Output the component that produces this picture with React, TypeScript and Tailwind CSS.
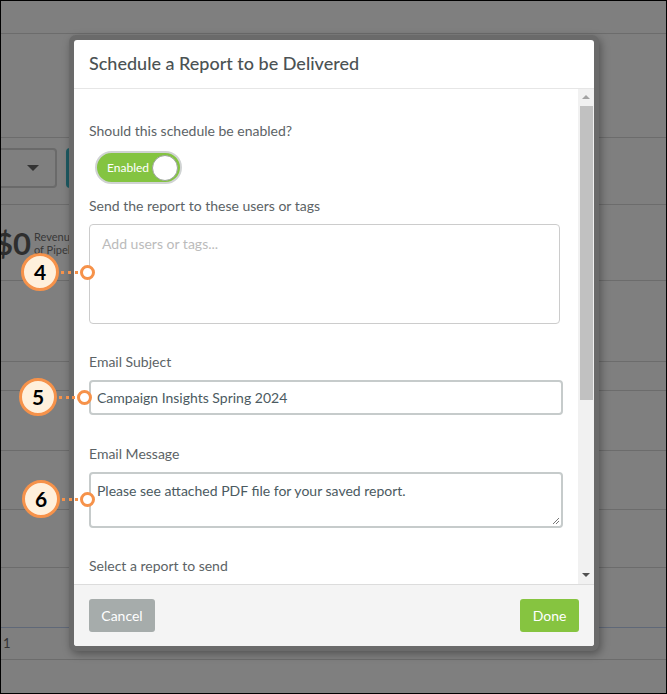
import React from "react";

const rowHeights = [33, 104, 67, 76, 81, 29, 60, 59, 58];

function Marker({ n, cx, cy, dx }: { n: number; cx: number; cy: number; dx: number }) {
  // big numbered circle + dotted leader + small hollow circle
  return (
    <div className="absolute flex items-center" style={{ left: cx - 20, top: cy - 20 }}>
      <div className="flex h-[38px] w-[38px] items-center justify-center rounded-full border-[3px] border-[#f6924a] bg-[#fff0dc] text-[21px] font-bold text-black">
        {n}
      </div>
      <div className="ml-[2px] h-[3px] border-t-[3px] border-dotted border-[#f6924a]" style={{ width: dx - cx - 31 }} />
      <div className="ml-[2px] h-[15px] w-[15px] rounded-full border-[3px] border-[#f6924a] bg-white" />
    </div>
  );
}

function Toggle() {
  return (
    <div className="flex h-[33px] w-[87px] items-center rounded-full border-2 border-[#d0d3d3] bg-[#84c441] pl-[10px] pr-[2px]">
      <span className="flex-1 text-[12px] text-white">Enabled</span>
      <div className="h-[26px] w-[26px] rounded-full border border-[#9aa29a] bg-white" />
    </div>
  );
}

function Label({ children, className = "" }: { children: React.ReactNode; className?: string }) {
  return <div className={`h-[20px] text-[14px] leading-[20px] text-[#5c6366] ${className}`}>{children}</div>;
}

export default function App() {
  return (
    <div className="relative h-[694px] w-[667px] overflow-hidden border border-black bg-[#7f7f7f] font-['Lato','Noto_Sans',sans-serif]">
      {/* dimmed page behind the modal */}
      <div className="flex flex-col">
        {rowHeights.map((h, i) => (
          <div key={i} className="border-b border-[#6c6c6c]" style={{ height: h }}>
            {i === 2 && (
              <div className="flex gap-[9px] pt-[10px]">
                <div className="flex h-[40px] w-[56px] items-center justify-end rounded-r-[4px] border-2 border-l-0 border-[#6a6a6a] pr-[16px]">
                  <div className="h-0 w-0 border-x-[6px] border-t-[6px] border-x-transparent border-t-[#333]" />
                </div>
                <div className="h-[40px] w-[30px] rounded-l-[4px] bg-[#1d5a62]" />
              </div>
            )}
            {i === 3 && (
              <div className="flex items-center gap-[3px] pt-[22px]">
                <span className="ml-[-6px] text-[31px] font-bold leading-[32px] text-[#2e2e2e]">$0</span>
                <div className="text-[11px] leading-[13px] text-[#383838]">
                  <div>Revenue</div>
                  <div>of Pipeline</div>
                </div>
              </div>
            )}
          </div>
        ))}
        <div className="h-[60px] border-b border-[#5f6878]" />
        <div className="flex h-[32px] items-center border-b border-[#6c6c6c] pl-[2px] text-[13px] text-[#333]">1</div>
      </div>

      {/* modal */}
      <div className="absolute left-[68px] top-[34px] rounded-[7px] bg-[#6a6a6a] p-[5px] shadow-[2px_3px_8px_rgba(0,0,0,0.35)]">
        <div className="flex h-[606px] w-[520px] flex-col overflow-hidden rounded-[3px] bg-white">
          <div className="flex h-[49px] items-center border-b border-[#e6e6e6] pl-[15px] pb-[1px]">
            <h2 className="text-[18px] font-medium text-[#4b5254]">Schedule a Report to be Delivered</h2>
          </div>

          <div className="flex h-[495px] overflow-hidden">
            <div className="flex-1 pl-[15px] pr-[15px] pt-[32px]">
              <Label>Should this schedule be enabled?</Label>
              <div className="mt-[10px] pl-[6px]">
                <Toggle />
              </div>
              <Label className="mt-[12px]">Send the report to these users or tags</Label>
              <div className="mt-[8px] h-[100px] w-[471px] rounded-[4px] border border-[#cccccc] px-[12px] pt-[8px] text-[14px] text-[#bbbbbb]">
                Add users or tags...
              </div>
              <Label className="mt-[28px]">Email Subject</Label>
              <div className="mt-[8px] flex h-[35px] w-[474px] items-center rounded-[4px] border-2 border-[#c6cbcb] pl-[6px] text-[14px] text-[#4b5a61]">
                Campaign Insights Spring 2024
              </div>
              <Label className="mt-[29px]">Email Message</Label>
              <div className="relative mt-[8px] h-[56px] w-[474px] rounded-[4px] border-2 border-[#c6cbcb] pl-[6px] pt-[6px] text-[14px] text-[#4b5a61]">
                Please see attached PDF file for your saved report.
                <svg className="absolute bottom-[1px] right-[1px]" width="9" height="9" viewBox="0 0 9 9">
                  <path d="M8 2L2 8M8 5L5 8" stroke="#777" strokeWidth="1" />
                </svg>
              </div>
              <Label className="mt-[28px]">Select a report to send</Label>
            </div>

            {/* scrollbar */}
            <div className="flex w-[17px] flex-col items-center bg-[#f1f1f1]">
              <div className="mt-[6px] h-0 w-0 border-x-[4px] border-b-[4px] border-x-transparent border-b-[#a3a3a3]" />
              <div className="mt-[7px] h-[294px] w-[13px] bg-[#c1c1c1]" />
              <div className="mt-auto mb-[7px] h-0 w-0 border-x-[4px] border-t-[4px] border-x-transparent border-t-[#505050]" />
            </div>
          </div>

          <div className="flex flex-1 items-start justify-between border-t border-[#dcdcdc] bg-[#f4f4f4] px-[15px] pt-[14px]">
            <button className="h-[33px] w-[66px] rounded-[3px] bg-[#a6acab] text-[14px] text-white">Cancel</button>
            <button className="h-[33px] w-[59px] rounded-[3px] bg-[#86c440] text-[14px] text-white">Done</button>
          </div>
        </div>
      </div>

      {/* callouts */}
      <Marker n={4} cx={40} cy={272} dx={88} />
      <Marker n={5} cx={38} cy={397} dx={85} />
      <Marker n={6} cx={41} cy={499} dx={88} />
    </div>
  );
}
